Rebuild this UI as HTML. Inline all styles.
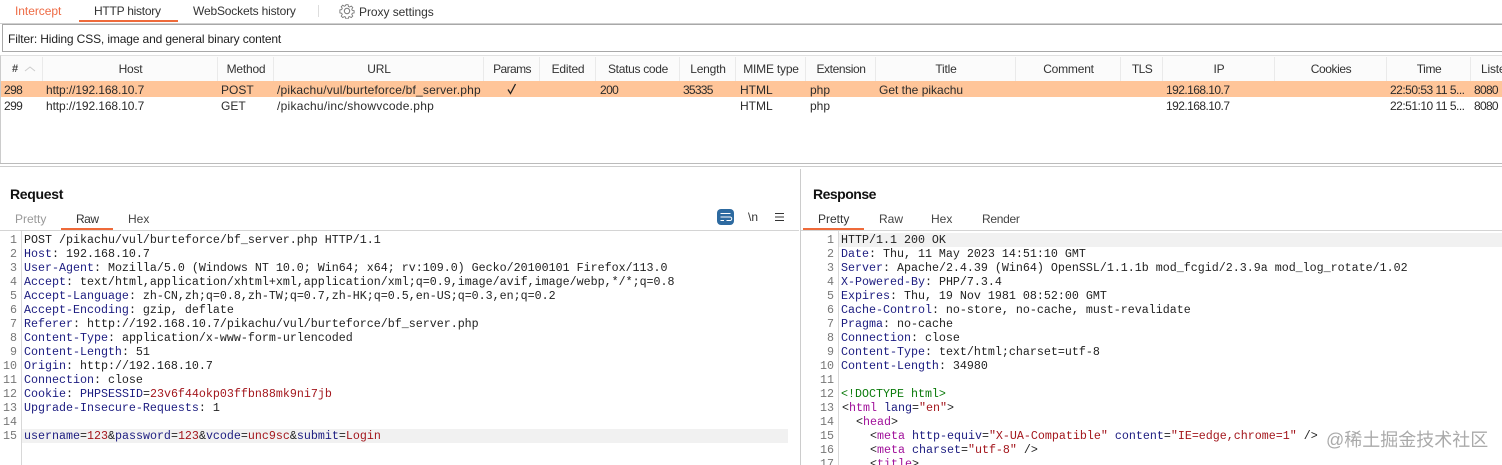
<!DOCTYPE html>
<html><head><meta charset="utf-8">
<style>
html,body{margin:0;padding:0;background:#fff}
#p{position:relative;width:1502px;height:465px;overflow:hidden;background:#fff;font-family:"Liberation Sans",sans-serif;font-size:12px;color:#222}
#p div,#p span.a{position:absolute;white-space:nowrap}
.b{position:absolute}
.h{top:62px;height:14px;line-height:14px;text-align:center;font-size:12px;color:#333;letter-spacing:-.2px}
.c{height:14px;line-height:14px;font-size:12px;color:#2b2b2b}
.d{letter-spacing:-.6px}
.r1{top:83px}.r2{top:99px}
.s{top:57px;width:1px;height:24px;background:#eaeaea}
.m{font-family:"Liberation Mono",monospace;font-size:11.67px;line-height:14px;height:14px;color:#222;white-space:pre}
.n{font-family:"Liberation Mono",monospace;font-size:11.67px;line-height:14px;height:14px;color:#777;text-align:right}
i{font-style:normal;color:#1c1c80}
b{font-weight:normal;color:#a3161c}
u{text-decoration:none;color:#0a7a0a}
em{font-style:normal;color:#a0109a}
</style></head><body><div id="p">

<div style="left:15px;top:4px;font-size:12px;line-height:14px;color:#ee6b45;letter-spacing:-.05px">Intercept</div>
<div style="left:94px;top:4px;font-size:12px;line-height:14px;color:#333;letter-spacing:-.25px">HTTP history</div>
<div style="left:79px;top:20px;width:99px;height:2px;background:#ee6a3a"></div>
<div style="left:193px;top:4px;font-size:12px;line-height:14px;color:#333;letter-spacing:-.17px">WebSockets history</div>
<div style="left:318px;top:5px;width:1px;height:12px;background:#ddd"></div>
<svg class="b" style="left:339px;top:3px" width="16" height="16" viewBox="0 0 16 16" fill="none" stroke="#777" stroke-width="1"><path d="M6.8 1h2.4l.4 2 1.4.6 1.7-1.1 1.7 1.7-1.1 1.7.6 1.4 2 .4v2.4l-2 .4-.6 1.4 1.1 1.7-1.7 1.7-1.7-1.1-1.4.6-.4 2H6.8l-.4-2-1.4-.6-1.7 1.1-1.7-1.7 1.1-1.7-.6-1.4-2-.4V6.800l2-.4.6-1.400-1.100-1.700 1.700-1.700 1.700 1.100 1.400-.6z" transform="translate(.8 .8) scale(.9)"/><circle cx="8" cy="8" r="2.700"/></svg>
<div style="left:359px;top:5px;font-size:12px;line-height:14px;color:#333;letter-spacing:-.05px">Proxy settings</div>

<div style="left:0;top:23px;width:1502px;height:1px;background:#d0d0d0"></div>
<div style="left:2px;top:24px;width:1500px;height:28px;box-sizing:border-box;border:1px solid #a8a8a8;border-right:0;background:#fff"></div>
<div style="left:8px;top:32px;font-size:12px;line-height:14px;color:#222;letter-spacing:-.135px">Filter: Hiding CSS, image and general binary content</div>

<div style="left:0;top:55px;width:1502px;height:108px;border-top:1px solid #e0e0e0;border-left:1px solid #ccc"></div>
<div style="left:1px;top:56px;width:1501px;height:25px;background:#fbfbfb"></div>

<div class="h" style="left:12px;font-weight:bold;font-size:11px;color:#444">#</div>
<svg class="b" style="left:24px;top:65px" width="12" height="8" viewBox="0 0 12 8" fill="none" stroke="#ccc"><path d="M1 6l5-4 5 4"/></svg>
<div class="h" style="left:43px;width:175px">Host</div>
<div class="h" style="left:218px;width:56px">Method</div>
<div class="h" style="left:274px;width:210px">URL</div>
<div class="h" style="left:484px;width:56px;letter-spacing:-.6px">Params</div>
<div class="h" style="left:540px;width:56px">Edited</div>
<div class="h" style="left:596px;width:84px;letter-spacing:-.3px">Status code</div>
<div class="h" style="left:680px;width:56px">Length</div>
<div class="h" style="left:736px;width:70px">MIME type</div>
<div class="h" style="left:806px;width:70px;letter-spacing:-.4px">Extension</div>
<div class="h" style="left:876px;width:140px">Title</div>
<div class="h" style="left:1016px;width:105px">Comment</div>
<div class="h" style="left:1121px;width:42px;letter-spacing:-.6px">TLS</div>
<div class="h" style="left:1163px;width:112px">IP</div>
<div class="h" style="left:1275px;width:112px;letter-spacing:-.4px">Cookies</div>
<div class="h" style="left:1387px;width:84px;letter-spacing:-.4px">Time</div>
<div class="h" style="left:1481px;text-align:left">Liste</div>
<div class="s" style="left:42px"></div><div class="s" style="left:217px"></div><div class="s" style="left:273px"></div><div class="s" style="left:483px"></div><div class="s" style="left:539px"></div><div class="s" style="left:595px"></div><div class="s" style="left:679px"></div><div class="s" style="left:735px"></div><div class="s" style="left:805px"></div><div class="s" style="left:875px"></div><div class="s" style="left:1015px"></div><div class="s" style="left:1120px"></div><div class="s" style="left:1162px"></div><div class="s" style="left:1274px"></div><div class="s" style="left:1386px"></div><div class="s" style="left:1470px"></div>

<div style="left:1px;top:81px;width:1501px;height:16px;background:#ffc599"></div>
<div class="c r1 d" style="left:4px">298</div><div class="c r1" style="left:46px;letter-spacing:-.1px">http://192.168.10.7</div><div class="c r1" style="left:221px">POST</div><div class="c r1" style="left:277px;letter-spacing:.19px">/pikachu/vul/burteforce/bf_server.php</div>
<svg class="b" style="left:506px;top:83px" width="12" height="12" viewBox="0 0 12 12" fill="none" stroke="#222" stroke-width="1.300"><path d="M2 6.500l2.500 4L9.500 1"/></svg>
<div class="c r1 d" style="left:600px">200</div><div class="c r1" style="left:683px;letter-spacing:-.75px">35335</div><div class="c r1" style="left:740px">HTML</div><div class="c r1" style="left:810px">php</div><div class="c r1" style="left:879px">Get the pikachu</div><div class="c r1" style="left:1166px;letter-spacing:-.55px">192.168.10.7</div><div class="c r1" style="left:1390px;letter-spacing:-.5px">22:50:53 11 5...</div><div class="c r1" style="left:1474px;letter-spacing:-.7px">8080</div>
<div class="c r2 d" style="left:4px">299</div><div class="c r2" style="left:46px;letter-spacing:-.1px">http://192.168.10.7</div><div class="c r2" style="left:221px">GET</div><div class="c r2" style="left:277px;letter-spacing:.27px">/pikachu/inc/showvcode.php</div><div class="c r2" style="left:740px">HTML</div><div class="c r2" style="left:810px">php</div><div class="c r2" style="left:1166px;letter-spacing:-.55px">192.168.10.7</div><div class="c r2" style="left:1390px;letter-spacing:-.5px">22:51:10 11 5...</div><div class="c r2" style="left:1474px;letter-spacing:-.7px">8080</div>

<div style="left:0;top:163px;width:1502px;height:1px;background:#bbb"></div>
<div style="left:0;top:166px;width:1502px;height:1px;background:#ccc"></div>
<div style="left:800px;top:169px;width:1px;height:296px;background:#ccc"></div>

<div style="left:10px;top:186px;font-size:14px;line-height:16px;font-weight:bold;color:#111;letter-spacing:-.3px">Request</div>
<div style="left:15px;top:212px;line-height:14px;color:#999">Pretty</div>
<div style="left:76px;top:212px;line-height:14px;color:#333;letter-spacing:-.5px">Raw</div>
<div style="left:128px;top:212px;line-height:14px;color:#444">Hex</div>
<div style="left:61px;top:228px;width:52px;height:2px;background:#ee6a3a"></div>
<div style="left:0;top:230px;width:799px;height:1px;background:#d4d4d4"></div>
<div style="left:717px;top:209px;width:17px;height:16px;border-radius:4px;background:#2d6aa0"></div>
<svg class="b" style="left:717px;top:209px" width="17" height="16" viewBox="0 0 17 16" fill="none" stroke="#fff"><path d="M3.500 4.500h10M3.500 8h9.500a1.700 1.700 0 0 1 0 3.500H9.500M3.500 11.500h3.500"/></svg>
<div style="left:748px;top:210px;line-height:14px;font-size:12px;color:#333">\n</div>
<svg class="b" style="left:775px;top:212px" width="10" height="10" viewBox="0 0 10 10" stroke="#333"><path d="M0 1.500h9M0 5h9M0 8.500h9"/></svg>

<div style="left:21px;top:231px;width:1px;height:234px;background:#d8d8d8"></div>
<div style="left:22px;top:429px;width:766px;height:14px;background:#f1f1f1"></div>

<div class="n" style="left:0;top:233px;width:17px">1</div>
<div class="n" style="left:0;top:247px;width:17px">2</div>
<div class="n" style="left:0;top:261px;width:17px">3</div>
<div class="n" style="left:0;top:275px;width:17px">4</div>
<div class="n" style="left:0;top:289px;width:17px">5</div>
<div class="n" style="left:0;top:303px;width:17px">6</div>
<div class="n" style="left:0;top:317px;width:17px">7</div>
<div class="n" style="left:0;top:331px;width:17px">8</div>
<div class="n" style="left:0;top:345px;width:17px">9</div>
<div class="n" style="left:0;top:359px;width:17px">10</div>
<div class="n" style="left:0;top:373px;width:17px">11</div>
<div class="n" style="left:0;top:387px;width:17px">12</div>
<div class="n" style="left:0;top:401px;width:17px">13</div>
<div class="n" style="left:0;top:415px;width:17px">14</div>
<div class="n" style="left:0;top:429px;width:17px">15</div>

<div class="m" style="left:24px;top:233px">POST /pikachu/vul/burteforce/bf_server.php HTTP/1.1</div>
<div class="m" style="left:24px;top:247px"><i>Host</i>: 192.168.10.7</div>
<div class="m" style="left:24px;top:261px"><i>User-Agent</i>: Mozilla/5.0 (Windows NT 10.0; Win64; x64; rv:109.0) Gecko/20100101 Firefox/113.0</div>
<div class="m" style="left:24px;top:275px"><i>Accept</i>: text/html,application/xhtml+xml,application/xml;q=0.9,image/avif,image/webp,*/*;q=0.8</div>
<div class="m" style="left:24px;top:289px"><i>Accept-Language</i>: zh-CN,zh;q=0.8,zh-TW;q=0.7,zh-HK;q=0.5,en-US;q=0.3,en;q=0.2</div>
<div class="m" style="left:24px;top:303px"><i>Accept-Encoding</i>: gzip, deflate</div>
<div class="m" style="left:24px;top:317px"><i>Referer</i>: http://192.168.10.7/pikachu/vul/burteforce/bf_server.php</div>
<div class="m" style="left:24px;top:331px"><i>Content-Type</i>: application/x-www-form-urlencoded</div>
<div class="m" style="left:24px;top:345px"><i>Content-Length</i>: 51</div>
<div class="m" style="left:24px;top:359px"><i>Origin</i>: http://192.168.10.7</div>
<div class="m" style="left:24px;top:373px"><i>Connection</i>: close</div>
<div class="m" style="left:24px;top:387px"><i>Cookie</i>: <i>PHPSESSID</i>=<b>23v6f44okp03ffbn88mk9ni7jb</b></div>
<div class="m" style="left:24px;top:401px"><i>Upgrade-Insecure-Requests</i>: 1</div>
<div class="m" style="left:24px;top:429px"><i>username</i>=<b>123</b>&amp;<i>password</i>=<b>123</b>&amp;<i>vcode</i>=<b>unc9sc</b>&amp;<i>submit</i>=<b>Login</b></div>

<div style="left:813px;top:186px;font-size:14px;line-height:16px;font-weight:bold;color:#111;letter-spacing:-.5px">Response</div>
<div style="left:818px;top:212px;line-height:14px;color:#333">Pretty</div>
<div style="left:879px;top:212px;line-height:14px;color:#444">Raw</div>
<div style="left:931px;top:212px;line-height:14px;color:#444">Hex</div>
<div style="left:982px;top:212px;line-height:14px;color:#444;letter-spacing:-.3px">Render</div>
<div style="left:803px;top:228px;width:61px;height:2px;background:#ee6a3a"></div>
<div style="left:801px;top:230px;width:701px;height:1px;background:#d4d4d4"></div>
<div style="left:838px;top:231px;width:1px;height:234px;background:#d8d8d8"></div>
<div style="left:839px;top:233px;width:663px;height:14px;background:#f1f1f1"></div>

<div class="n" style="left:801px;top:233px;width:33px">1</div>
<div class="n" style="left:801px;top:247px;width:33px">2</div>
<div class="n" style="left:801px;top:261px;width:33px">3</div>
<div class="n" style="left:801px;top:275px;width:33px">4</div>
<div class="n" style="left:801px;top:289px;width:33px">5</div>
<div class="n" style="left:801px;top:303px;width:33px">6</div>
<div class="n" style="left:801px;top:317px;width:33px">7</div>
<div class="n" style="left:801px;top:331px;width:33px">8</div>
<div class="n" style="left:801px;top:345px;width:33px">9</div>
<div class="n" style="left:801px;top:359px;width:33px">10</div>
<div class="n" style="left:801px;top:373px;width:33px">11</div>
<div class="n" style="left:801px;top:387px;width:33px">12</div>
<div class="n" style="left:801px;top:401px;width:33px">13</div>
<div class="n" style="left:801px;top:415px;width:33px">14</div>
<div class="n" style="left:801px;top:429px;width:33px">15</div>
<div class="n" style="left:801px;top:443px;width:33px">16</div>
<div class="n" style="left:801px;top:457px;width:33px">17</div>

<div class="m" style="left:841px;top:233px">HTTP/1.1 200 OK</div>
<div class="m" style="left:841px;top:247px"><i>Date</i>: Thu, 11 May 2023 14:51:10 GMT</div>
<div class="m" style="left:841px;top:261px"><i>Server</i>: Apache/2.4.39 (Win64) OpenSSL/1.1.1b mod_fcgid/2.3.9a mod_log_rotate/1.02</div>
<div class="m" style="left:841px;top:275px"><i>X-Powered-By</i>: PHP/7.3.4</div>
<div class="m" style="left:841px;top:289px"><i>Expires</i>: Thu, 19 Nov 1981 08:52:00 GMT</div>
<div class="m" style="left:841px;top:303px"><i>Cache-Control</i>: no-store, no-cache, must-revalidate</div>
<div class="m" style="left:841px;top:317px"><i>Pragma</i>: no-cache</div>
<div class="m" style="left:841px;top:331px"><i>Connection</i>: close</div>
<div class="m" style="left:841px;top:345px"><i>Content-Type</i>: text/html;charset=utf-8</div>
<div class="m" style="left:841px;top:359px"><i>Content-Length</i>: 34980</div>
<div class="m" style="left:841px;top:387px"><u>&lt;!DOCTYPE html&gt;</u></div>
<div class="m" style="left:842px;top:401px">&lt;<em>html</em> <i>lang</i>=<b>"en"</b>&gt;</div>
<div class="m" style="left:856px;top:415px">&lt;<em>head</em>&gt;</div>
<div class="m" style="left:870px;top:429px">&lt;<em>meta</em> <i>http-equiv</i>=<b>"X-UA-Compatible"</b> <i>content</i>=<b>"IE=edge,chrome=1"</b> /&gt;</div>
<div class="m" style="left:870px;top:443px">&lt;<em>meta</em> <i>charset</i>=<b>"utf-8"</b> /&gt;</div>
<div class="m" style="left:870px;top:457px">&lt;<em>title</em>&gt;</div>

<div style="left:1326px;top:430px;font-family:'Liberation Sans','Noto Sans CJK SC',sans-serif;font-size:18px;line-height:20px;color:#aaa">@稀土掘金技术社区</div>
</div></body></html>
